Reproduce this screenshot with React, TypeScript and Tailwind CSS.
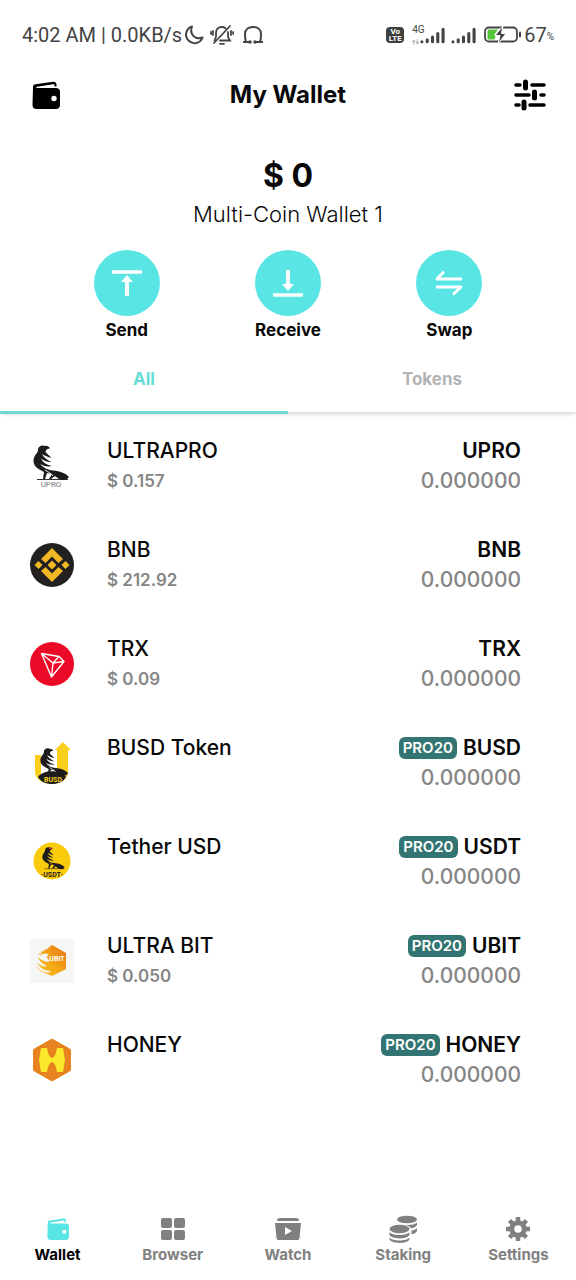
import React from "react"

interface Coin{
  name: string
  symbol: string
  price?: string
  pro?: boolean
  logo: React.ReactNode
}

/* -------------- Logos ------------- */
function Crow({transform, stripe}:{transform?: string, stripe: string}){
  return(
    <g transform={transform}>
      {/* head and body */}
      <path fill="#1d1b1c" d="M17 3.500C14 3.500 13 5 12.500 7C14 9 17 11 18.500 13C14 12 11 10 9 9C11 13 15 15.500 18.500 17C15 17.500 11 16 8 13.500C10 18 14 20 19 21C15 22 10 21 7 18.500C10 23 15 25 20 25.500C27 26 32 28 36 32C34 35 30 36 26 34L22 31L18 34H16L19 29L14 28L12 34H10L11 27C5 24 0 21 .5 15C1 10 5 8 5 5C5 1 9-.5 12 1C14 .5 16 1.500 17 3.500Z" />
      <path fill="none" stroke={stripe} strokeWidth=".9" d="M12 25C15 27 18 28 20 31" />
      <path fill="none" stroke="#1d1b1c" strokeWidth=".9" d="M4 34.500H35" />
    </g>
  )
}

function UproLogo(){
  return(
    <svg viewBox="0 0 44 44" className="w-[44px] h-[44px]">
      <Crow transform="translate(3 1)" stripe="#fff" />
      <text x="21" y="43" fontSize="8" textAnchor="middle" fill="#777" fontFamily="Roboto, sans-serif">UPRO</text>
    </svg>
  )
}

function BnbLogo(){
  return(
    <svg viewBox="0 0 44 44" className="w-[44px] h-[44px]">
      <circle cx="22" cy="22" r="22" fill="#222120" />
      <g fill="#f0b822">
        <path d="M22 5L33 16L28.500 20L22 13.500L15.500 20L11 16Z" />
        <path d="M22 39L33 28L28.500 24L22 30.500L15.500 24L11 28Z" />
        <path d="M22 17.500L26.500 22L22 26.500L17.500 22Z M8.500 18L12.500 22L8.500 26L4.500 22Z M35.500 18L39.500 22L35.500 26L31.500 22Z" />
      </g>
    </svg>
  )
}

function TrxLogo(){
  return(
    <svg viewBox="0 0 44 44" className="w-[44px] h-[44px]">
      <circle cx="22" cy="22" r="22" fill="#ec0928" />
      <path d="M11.500 11.500L29 14.500L34 19.500L21.500 35Z M11.500 11.500L23 21L34 19.500M23 21L21.500 35M23 21L29 14.500" fill="none" stroke="#fff" strokeWidth="1.400" strokeLinejoin="round" />
    </svg>
  )
}

function BusdLogo(){
  return(
    <svg viewBox="0 0 44 44" className="w-[44px] h-[44px]">
      <path fill="#f9cf1c" d="M5 14H11V34H27V9H25L33 1L41 9H38V31C38 38 31 43 22 43S5 38 5 31Z" />
      <path fill="#1d1b1c" d="M8 36C13 29 30 28 36 36C33 41 28 43 22 43S11 41 8 36Z" />
      <Crow transform="translate(10 7) scale(.78)" stripe="#fff" />
      <text x="23" y="41" fontSize="7" fontWeight="700" textAnchor="middle" fill="#f9cf1c" fontFamily="Roboto, sans-serif">BUSD</text>
    </svg>
  )
}

function UsdtLogo(){
  return(
    <svg viewBox="0 0 44 44" className="w-[44px] h-[44px]">
      <circle cx="22" cy="21" r="18.500" fill="#facb0a" />
      <Crow transform="translate(12 7) scale(.63)" stripe="#facb0a" />
      <path d="M19 8.500L22 8.500" stroke="#c3381c" strokeWidth="1.500" />
      <text x="22" y="37" fontSize="7" fontWeight="700" textAnchor="middle" fill="#1d1b1c" fontFamily="Roboto, sans-serif">·USDT·</text>
    </svg>
  )
}

function UbitLogo(){
  return(
    <svg viewBox="0 0 44 44" className="w-[44px] h-[44px]">
      <defs>
        <linearGradient id="ubit" x1="0" y1="1" x2="1" y2="0">
          <stop offset="0" stopColor="#f9c623" />
          <stop offset="0.500" stopColor="#f3a414" />
          <stop offset="1" stopColor="#e66f19" />
        </linearGradient>
      </defs>
      <rect width="44" height="44" fill="#f6f6f6" />
      <path fill="url(#ubit)" d="M22 6L36 14V30L22 37L15 34C18 34 20 33 21 32C15 32 10 29 7 24C11 27 15 28 17 27C12 25 9 22 8 18C12 22 17 24 20 22C17 20 16 17 19 15C16 14 12 14 10 17C11 13 14 11 17 10Z" />
      <path fill="none" stroke="#f6bb55" strokeWidth="1" d="M7 28C10 32 14 34 18 34M15 12C11 12 9 14 9 16" />
      <text x="27" y="22" fontSize="7" fontWeight="700" textAnchor="middle" fill="#fff" fontFamily="Roboto, sans-serif">UBIT</text>
    </svg>
  )
}

function HoneyLogo(){
  return(
    <svg viewBox="0 0 44 44" className="w-[44px] h-[44px]">
      <path d="M22 1L40.500 11.500V32.500L22 43L3.500 32.500V11.500Z" fill="#e78420" strokeLinejoin="round" stroke="#e78420" />
      <path d="M11 10H17C18 15 19 19 22 20C25 19 26 15 27 10H33L35 22L33 34H27C26 29 25 25 22 24C19 25 18 29 17 34H11L9 22Z" fill="#fbe72b" />
    </svg>
  )
}

const coins: Coin[] = [
  { name: "ULTRAPRO", symbol: "UPRO", price: "$ 0.157", logo: <UproLogo /> },
  { name: "BNB", symbol: "BNB", price: "$ 212.92", logo: <BnbLogo /> },
  { name: "TRX", symbol: "TRX", price: "$ 0.09", logo: <TrxLogo /> },
  { name: "BUSD Token", symbol: "BUSD", pro: true, logo: <BusdLogo /> },
  { name: "Tether USD", symbol: "USDT", pro: true, logo: <UsdtLogo /> },
  { name: "ULTRA BIT", symbol: "UBIT", price: "$ 0.050", pro: true, logo: <UbitLogo /> },
  { name: "HONEY", symbol: "HONEY", pro: true, logo: <HoneyLogo /> },
]

/* -------------- Icons ------------- */
function WalletIcon({className}:{className: string}){
  return(
    <svg viewBox="0 0 28 28" className={className} fill="currentColor">
      <path d="M1 6C1 4.500 2 3.500 3.500 3.300L21 .7C23 .4 24.500 1.500 24.500 3.500V5.500H22.500V4.500C22.500 3.500 22 3 21 3.200L5 5.700C4 6 4 7 5 7H24C26.500 7 28 8.500 28 11V24C28 26.500 26.500 28 24 28H4.500C2 28 .5 26.500 .5 24Z" />
      <circle cx="22" cy="17.500" r="2.700" fill="#fff" />
    </svg>
  )
}

function Signal(){
  return(
    <svg viewBox="0 0 26 17" className="w-[25px] h-[17px]" stroke="#444" strokeWidth="3.200" strokeLinecap="round">
      <path d="M2 15V15.100M7.500 13V15M13 10V15M18.500 6.500V15M24 2V15" />
    </svg>
  )
}

function StatusBar(){
  return(
    <div className="flex items-center justify-between h-[70px] px-[22px] font-[Roboto,sans-serif] text-[#444]">
      <div className="flex items-center">
        <span className="text-[20px] leading-6">4:02 AM | 0.0KB/s</span>
        <svg viewBox="0 0 20 20" className="w-[20px] h-[20px] ml-0.5" fill="none" stroke="currentColor" strokeWidth="2" strokeLinejoin="round">
          <path d="M8 1.500C2 3.500 0 11 4.500 15.500C9 20 16.500 18.500 18.500 12.500C11 15.500 5 9 8 1.500Z" />
        </svg>
        <svg viewBox="0 0 24 20" className="w-[24px] h-[20px] ml-1.5" fill="none" stroke="currentColor" strokeWidth="1.800" strokeLinecap="round">
          <path d="M6 12V8C6 4 8.500 2 12 2C13.500 2 14.500 2.500 15.500 3.200M18 7V12L20 15.500H10M6 12L4.500 15.500M20 1L4 18M10 18.800H14M3 6V10M1 7V9M21 6V10M23.200 7V9" />
        </svg>
        <svg viewBox="0 0 22 20" className="w-[22px] h-[20px] ml-2" fill="none" stroke="currentColor" strokeWidth="2">
          <path d="M4 17C3 14 3 12 3 9C3 4.500 6.500 2 11 2S19 4.500 19 9C19 12 19 14 18 17" />
          <path d="M1 17H8M12 17H21" />
          <circle cx="8" cy="17" r=".8" fill="currentColor" />
          <circle cx="13" cy="17" r=".8" fill="currentColor" />
        </svg>
      </div>

      <div className="flex items-center">
        <span className="flex flex-col items-center justify-center w-[18px] h-[16px] rounded-sm bg-[#3f3f3f] text-white text-[8px] leading-[7px] font-bold">
          <span>Vo</span>
          <span>LTE</span>
        </span>
        <span className="flex flex-col w-[14px] h-[20px] ml-2 text-[10px] leading-[10px]">
          <span>4G</span>
          <svg viewBox="0 0 8 6" className="w-[7px] h-[6px] mt-1" fill="none" stroke="#999" strokeWidth="1">
            <path d="M2 6V1M0 3L2 1L4 3M6 0V5M4.500 3L6 5L8 3" />
          </svg>
        </span>
        <span className="flex gap-1.5 -ml-1.5">
          <Signal />
          <Signal />
        </span>
        <svg viewBox="0 0 38 18" className="w-[38px] h-[18px] ml-2">
          <rect x="1" y="1.500" width="32" height="14" rx="4" fill="#fff" stroke="#444" strokeWidth="1.800" />
          <path d="M5 3.500H14L10 9H12L10.500 13.500H5C4 13.500 3.500 13 3.500 12V5C3.500 4 4 3.500 5 3.500Z" fill="#56c43a" />
          <path d="M19 0L11 9.500H16L14 18L22 7.500H17.500Z" fill="#444" stroke="#fff" strokeWidth="1" />
          <path d="M36 6.500V10.500" stroke="#444" strokeWidth="2" strokeLinecap="round" />
        </svg>
        <span className="text-[20px] leading-6 ml-0.5">67</span>
        <span className="text-[10px] leading-3 pt-1">%</span>
      </div>
    </div>
  )
}

function ActionButton({label, children}:{label: string, children: React.ReactNode}){
  return(
    <button className="flex flex-col items-center gap-0.5 text-[17px] leading-6 font-bold cursor-pointer">
      <span className="flex items-center justify-center w-[66px] h-[66px] rounded-full bg-[#58e5e4]">{children}</span>
      {label}
    </button>
  )
}

function CoinRow({coin}:{coin: Coin}){
  return(
    <li className="flex items-center h-[99px] pl-[30px] pr-[55px]">
      {coin.logo}
      <div className="flex-1 h-[60px] ml-[33px]">
        <p className="text-[21px] leading-[30px] font-medium">{coin.name}</p>
        {coin.price && <p className="text-[17px] leading-[30px] font-semibold text-[#858585]">{coin.price}</p>}
      </div>
      <div className="flex flex-col items-end">
        <p className="flex items-center gap-1.5 text-[21px] leading-[30px] font-semibold">
          {coin.pro && <span className="h-[22px] px-1 rounded-md bg-[#337572] text-white text-[15px] leading-[22px] font-semibold">PRO20</span>}
          {coin.symbol}
        </p>
        <p className="text-[21px] leading-[30px] font-medium text-[#858585]">0.000000</p>
      </div>
    </li>
  )
}

function NavItem({label, active, children}:{label: string, active?: boolean, children: React.ReactNode}){
  return(
    <a href="#" className={active ? "flex flex-col items-center gap-0.5 text-black" : "flex flex-col items-center gap-0.5 text-[#808080]"}>
      <span className="flex items-center justify-center h-[28px]">{children}</span>
      <span className="text-[15px] leading-5 font-bold">{label}</span>
    </a>
  )
}

export default function App(){
  return(
    <div className="flex flex-col min-h-screen bg-white text-[#080808] font-[Inter,sans-serif]">
      <StatusBar />

      {/* -------------- Header ------------- */}
      <header className="flex items-center justify-between h-[50px] px-[30px]">
        <button aria-label="Wallets" className="w-[32px] cursor-pointer text-black"><WalletIcon className="w-[32px] h-[28px]" /></button>
        <h1 className="text-[24px] leading-8 font-bold">My Wallet</h1>
        <button aria-label="Filters" className="w-[32px] cursor-pointer">
          <svg viewBox="0 0 32 32" className="w-[32px] h-[32px]" fill="none" stroke="#000">
            <path strokeWidth="3.500" strokeLinecap="round" d="M2 6H6M18 6H30M2 16H15M27 16H30M2 26H5M16 26H30" />
            <path strokeWidth="5" strokeLinecap="round" strokeLinejoin="round" d="M11.500 3V9M20.500 13V19M10 23V29" />
          </svg>
        </button>
      </header>

      {/* -------------- Balance ------------- */}
      <section className="flex flex-col items-center pt-[36px]">
        <p className="text-[32px] leading-10 font-bold">$ 0</p>
        <p className="text-[22px] leading-9 font-light">Multi-Coin Wallet 1</p>
      </section>

      <section className="grid grid-cols-3 px-[46px] pt-[18px]">
        <ActionButton label="Send">
          <svg viewBox="0 0 30 28" className="w-[30px] h-[28px]" fill="none" stroke="#fff">
            <path strokeWidth="3.500" d="M0 3H30" />
            <path strokeWidth="4" d="M15 27V11" />
            <path fill="#fff" stroke="none" d="M15 6L21 13H9Z" />
          </svg>
        </ActionButton>
        <ActionButton label="Receive">
          <svg viewBox="0 0 30 28" className="w-[30px] h-[28px]" fill="none" stroke="#fff">
            <path strokeWidth="3.500" d="M0 26H30" />
            <path strokeWidth="4" d="M15 1V16" />
            <path fill="#fff" stroke="none" d="M15 22L21 15H9Z" />
          </svg>
        </ActionButton>
        <ActionButton label="Swap">
          <svg viewBox="0 0 28 26" className="w-[28px] h-[26px]" fill="none" stroke="#fff" strokeWidth="2.800" strokeLinejoin="round">
            <path d="M9 1.500L2 9H27M1 17H26L18 24.500" />
          </svg>
        </ActionButton>
      </section>

      {/* -------------- Tabs ------------- */}
      <div role="tablist" className="grid grid-cols-2 mt-1 h-[68px] border-b-2 border-[#e4e4e4] shadow-[0_3px_3px_-2px_rgba(0,0,0,0.12)] text-[17px] font-bold">
        <button role="tab" aria-selected="true" className="-mb-0.5 pt-0.5 border-b-3 border-[#6fd9d5] text-[#66dcd8] cursor-pointer">All</button>
        <button role="tab" aria-selected="false" className="pt-0.5 text-[#b4b4b4] cursor-pointer">Tokens</button>
      </div>

      {/* -------------- Coins ------------- */}
      <ul className="pt-0.5">
        {coins.map((coin)=><CoinRow key={coin.name} coin={coin} />)}
      </ul>

      {/* -------------- Bottom Nav ------------- */}
      <nav className="grid grid-cols-5 mt-auto pb-[15px]">
        <NavItem label="Wallet" active>
          <WalletIcon className="w-[24px] h-[22px] text-[#58e5e4]" />
        </NavItem>
        <NavItem label="Browser">
          <svg viewBox="0 0 26 22" className="w-[26px] h-[22px]" fill="currentColor">
            <rect x="1" width="11" height="10" rx="2" />
            <rect x="14" width="11" height="10" rx="2" />
            <rect x="1" y="12" width="11" height="10" rx="2" />
            <rect x="14" y="12" width="11" height="10" rx="2" />
          </svg>
        </NavItem>
        <NavItem label="Watch">
          <svg viewBox="0 0 28 22" className="w-[28px] h-[22px]" fill="currentColor">
            <path d="M3 3C3 1 4 0 6 0H22C24 0 25 1 25 3Z M1 5H27L25.500 20C25.400 21.500 24.500 22 23.500 22H4.500C3.500 22 2.600 21.500 2.500 20Z" />
            <path d="M11 9V17L18 13Z" fill="#fff" />
          </svg>
        </NavItem>
        <NavItem label="Staking">
          <svg viewBox="0 0 28 28" className="w-[28px] h-[28px]" fill="currentColor">
            <ellipse cx="18" cy="4.500" rx="10" ry="3.800" />
            <path d="M28 7.500V10C27 12 24.500 13 22 13.300C20.500 11 17 9.700 14 9.500C19 10.500 26 10 28 7.500Z M28 13V16C27 18 25 19 22.500 19.300V15.500C25 15.200 27 14.300 28 13Z" />
            <ellipse cx="10.500" cy="14" rx="10" ry="4.200" />
            <path d="M.5 17C3 21 18 21 20.500 17V20C18 24.500 3 24.500 .5 20Z M.5 22.500C3 26.500 18 26.500 20.500 22.500V24.500C18 29 3 29 .5 24.500Z" />
          </svg>
        </NavItem>
        <NavItem label="Settings">
          <svg viewBox="0 0 24 24" className="w-[24px] h-[24px]" fill="none" stroke="currentColor">
            <circle cx="12" cy="12" r="6.300" strokeWidth="5" />
            <path strokeWidth="4.500" d="M12 0V4M12 20V24M0 12H4M20 12H24M3.500 3.500L6.500 6.500M17.500 17.500L20.500 20.500M3.500 20.500L6.500 17.500M17.500 6.500L20.500 3.500" />
          </svg>
        </NavItem>
      </nav>
    </div>
  )
}
